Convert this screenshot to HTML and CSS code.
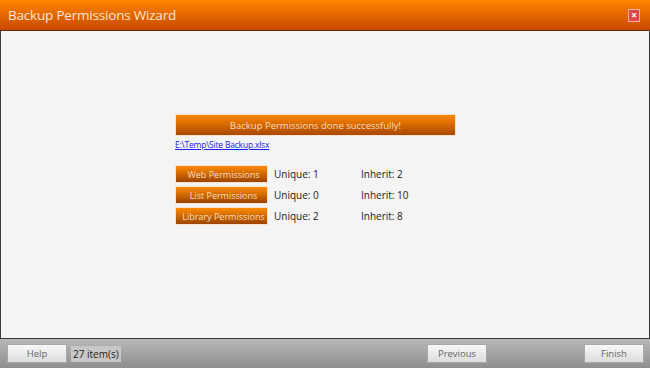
FILE: index.html
```html
<!DOCTYPE html>
<html lang="en">
<head>
  <link rel="stylesheet" href="styles.css">
</head>
<body>
  <div class="wizard">
    <div class="titlebar">
      <span class="title">Backup Permissions Wizard</span>
      <span class="close">&#215;</span>
    </div>
    <div class="content">
      <div class="result">
        <div class="banner">Backup Permissions done successfully!</div>
        <a class="file-link" href="#">E:\Temp\Site Backup.xlsx</a>
        <div class="rows">
          <div class="row">
            <span class="perm-btn">Web Permissions</span>
            <span class="unique">Unique: 1</span>
            <span class="inherit">Inherit: 2</span>
          </div>
          <div class="row">
            <span class="perm-btn">List Permissions</span>
            <span class="unique">Unique: 0</span>
            <span class="inherit">Inherit: 10</span>
          </div>
          <div class="row">
            <span class="perm-btn">Library Permissions</span>
            <span class="unique">Unique: 2</span>
            <span class="inherit">Inherit: 8</span>
          </div>
        </div>
      </div>
    </div>
    <div class="footer">
      <button class="btn">Help</button>
      <span class="count">27 item(s)</span>
      <span class="spacer"></span>
      <button class="btn">Previous</button>
      <button class="btn finish">Finish</button>
    </div>
  </div>
</body>
</html>
```

FILE: styles.css
```css
html, body {
  margin: 0;
  padding: 0;
}

body {
  font-family: "Open Sans", "DejaVu Sans", sans-serif;
  font-size: 10px;
  color: #222;
}

.wizard {
  width: 650px;
  height: 368px;
  display: flex;
  flex-direction: column;
}

.titlebar {
  height: 30px;
  box-sizing: border-box;
  display: flex;
  align-items: center;
  justify-content: space-between;
  padding: 0 10px 0 8px;
  background: linear-gradient(#ff8400, #c84a00);
}

.title {
  color: #fbe6d6;
  font-size: 13.5px;
  letter-spacing: -0.2px;
}

.close {
  width: 10px;
  height: 11px;
  line-height: 10px;
  text-align: center;
  font-size: 10px;
  font-weight: bold;
  color: #fff;
  background: #e04848;
  border: 1px solid #f7b0a8;
}

.content {
  flex: 1;
  background: #f4f4f4;
  border: 1px solid #3a3a3a;
  border-top-color: #5a2a10;
  padding: 83px 0 0 174px;
  box-sizing: border-box;
}

.result {
  width: 281px;
}

.banner {
  height: 22px;
  line-height: 21px;
  text-align: center;
  color: #f8dcc0;
  font-size: 9.5px;
  background: linear-gradient(#ff8600, #a84800);
  border: 1px solid #fbe2cc;
  box-sizing: border-box;
}

.file-link {
  display: inline-block;
  margin-top: 3px;
  font-size: 8.5px;
  color: #2020ee;
  letter-spacing: -0.2px;
}

.rows {
  margin-top: 14px;
  display: flex;
  flex-direction: column;
  gap: 3px;
}

.row {
  display: flex;
  align-items: center;
  height: 18px;
}

.perm-btn {
  width: 93px;
  height: 18px;
  box-sizing: border-box;
  line-height: 17px;
  text-align: center;
  color: #f7dcc6;
  font-size: 9px;
  background: linear-gradient(#ff8a00, #9c4400);
  border: 1px solid #fbe2cc;
  padding-left: 4px;
}

.unique {
  width: 87px;
  margin-left: 6px;
}

.footer {
  height: 29px;
  box-sizing: border-box;
  display: flex;
  align-items: center;
  padding: 0 6px 0 7px;
  background: linear-gradient(#b8b8b8, #8e8e8e);
}

.btn {
  width: 60px;
  height: 19px;
  box-sizing: border-box;
  font-family: "Open Sans", "DejaVu Sans", sans-serif;
  font-size: 9.5px;
  color: #666;
  background: linear-gradient(#f8f8f8, #dcdcdc);
  border: 1px solid #a8a8a8;
  padding: 0;
}

.count {
  margin-left: 4px;
  padding: 0 2px;
  height: 16px;
  line-height: 16px;
  font-size: 10px;
  color: #222;
  background: #c8c8c8;
}

.spacer {
  flex: 1;
}

.finish {
  margin-left: 97px;
}
```
